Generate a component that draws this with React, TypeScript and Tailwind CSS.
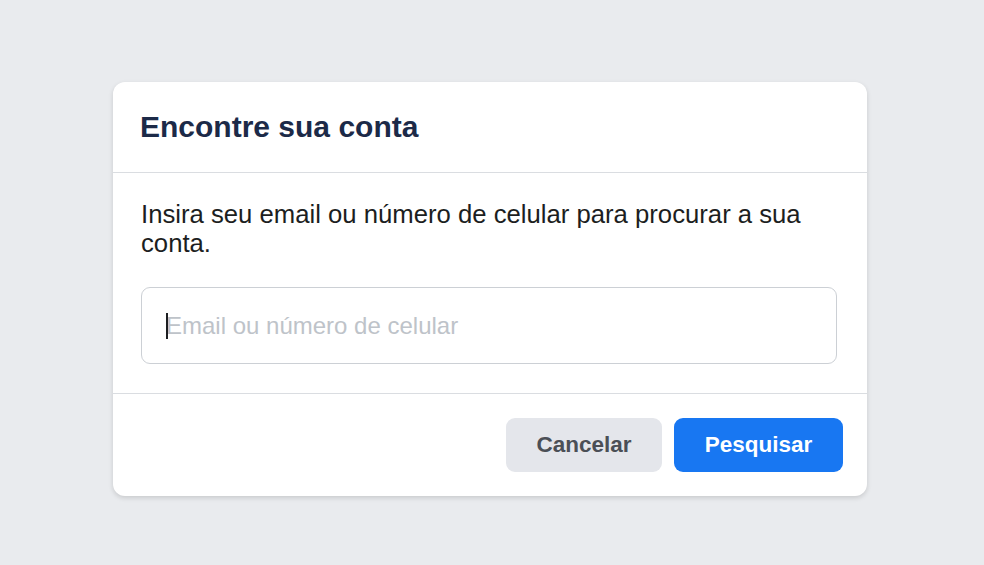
import { useState } from 'react'

export default function App() {
  const [value, setValue] = useState('')

  return (
    <div
      className="min-h-screen bg-[#e9ebee] pl-[113px] pt-[82px]"
      style={{ fontFamily: '"Liberation Sans", Arial, sans-serif' }}
    >
      <div className="w-[754px] rounded-[12px] bg-white shadow-[0_2px_5px_rgba(0,0,0,0.14)]">
        {/* Header */}
        <div className="border-b border-[#dadde1] px-[27px] py-[27px]">
          <h2 className="text-[30px] font-bold leading-[36px] text-[#1c2a48]">Encontre sua conta</h2>
        </div>

        {/* Body */}
        <div className="border-b border-[#dadde1] pb-[29px] pl-[28px] pr-[30px] pt-[27px]">
          <p className="text-[25.7px] leading-[29px] text-[#1c1e21]">
            Insira seu email ou número de celular para procurar a sua conta.
          </p>
          <div className="relative mt-[29px]">
            <input
              type="text"
              value={value}
              onChange={(e) => setValue(e.target.value)}
              placeholder="Email ou número de celular"
              className="h-[77px] w-full rounded-[9px] border border-[#ccd0d5] bg-white px-[24px] text-[24px] text-[#1c1e21] outline-none placeholder:text-[#bec3c9]"
            />
            {value === '' && (
              <span className="pointer-events-none absolute left-[25px] top-[26px] h-[26px] w-[2px] bg-[#1c1e21]" />
            )}
          </div>
        </div>

        {/* Footer */}
        <div className="flex justify-end gap-[12px] px-[24px] py-[24px]">
          <button className="h-[54px] w-[156px] rounded-[9px] bg-[#e4e6eb] text-[22.5px] font-bold text-[#4b4f56]">
            Cancelar
          </button>
          <button className="h-[54px] w-[169px] rounded-[9px] bg-[#1877f2] text-[22.5px] font-bold text-white">
            Pesquisar
          </button>
        </div>
      </div>
    </div>
  )
}
